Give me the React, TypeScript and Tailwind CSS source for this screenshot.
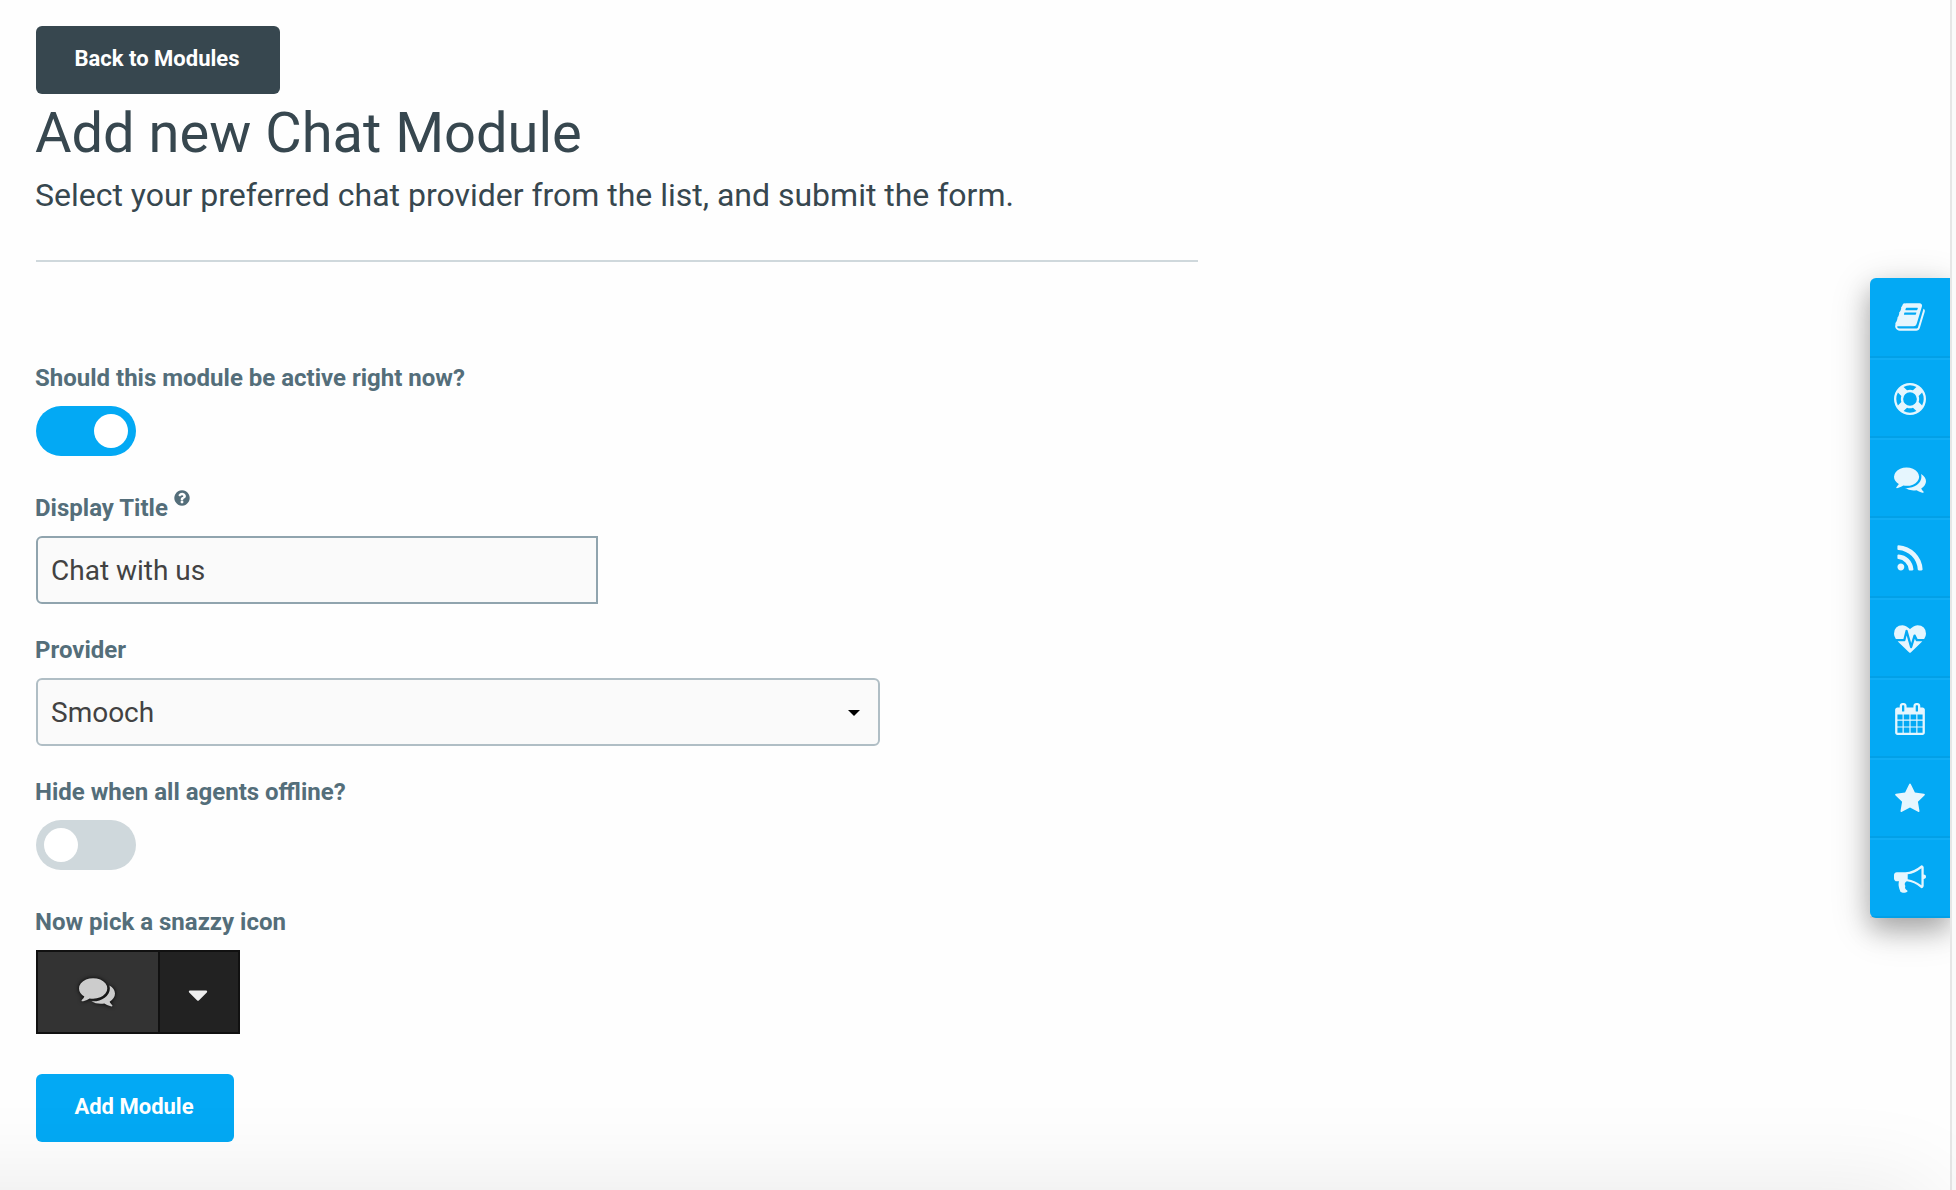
import React from "react";

const paths = {
  book: "M1703 478q40 57 18 129l-275 906q-19 64-76.5 107.5t-122.5 43.5h-923q-77 0-148.5-53.5t-99.5-131.5q-24-67-2-127 0-4 3-27t4-37q1-8-3-21.5t-3-19.5q2-11 8-21t16.5-23.5 16.5-23.5q23-38 45-91.5t30-91.5q3-10 .5-30t-.5-28q3-11 17-28t17-23q21-36 42-92t25-90q1-9-2.5-32t.5-28q4-13 22-30.5t22-22.5q19-26 42.5-84.5t27.5-96.5q1-8-3-25.5t-2-26.5q2-8 9-18t18-23 17-21q8-12 16.5-30.5t15-35 16-36 19.5-32 26.5-23.5 36-11.5 47.5 5.5l-1 3q38-9 51-9h761q74 0 114 56t18 130l-274 906q-36 119-71.5 153.5t-128.5 34.5h-869q-27 0-38 15-11 16-1 43 24 70 144 70h923q29 0 56-15.5t35-41.5l300-987q7-22 5-57 38 15 59 43zm-1064 2q-4 13 2 22.5t20 9.5h608q13 0 25.5-9.5t16.5-22.5l21-64q4-13-2-22.5t-20-9.5h-608q-13 0-25.5 9.5t-16.5 22.5zm-83 256q-4 13 2 22.5t20 9.5h608q13 0 25.5-9.5t16.5-22.5l21-64q4-13-2-22.5t-20-9.5h-608q-13 0-25.5 9.5t-16.5 22.5z",
  lifeRing: "M896 0q182 0 348 71t286 191 191 286 71 348-71 348-191 286-286 191-348 71-348-71-286-191-191-286-71-348 71-348 191-286 286-191 348-71zm0 128q-190 0-361 90l194 194q82-28 167-28t167 28l194-194q-171-90-361-90zm-678 1129l194-194q-28-82-28-167t28-167l-194-194q-90 171-90 361t90 361zm678 407q190 0 361-90l-194-194q-82 28-167 28t-167-28l-194 194q171 90 361 90zm0-384q159 0 271.5-112.5t112.5-271.5-112.5-271.5-271.5-112.5-271.5 112.5-112.5 271.5 112.5 271.5 271.5 112.5zm484-217l194 194q90-171 90-361t-90-361l-194 194q28 82 28 167t-28 167z",
  comments: "M1408 768q0 139-94 257t-256.5 186.5-353.5 68.5q-86 0-176-16-124 88-278 128-36 9-86 16h-3q-11 0-20.5-8t-11.5-21q-1-3-1-6.5t.5-6.5 2-6l2.5-5 3.5-5.5 4-5 4.5-5 4-4.5q5-6 23-25t26-29.5 22.5-29 25-38.5 20.5-44q-124-72-195-177t-71-224q0-139 94-257t256.5-186.5 353.5-68.5 353.5 68.5 256.5 186.5 94 257zm384 256q0 120-71 224.5t-195 176.5q10 24 20.5 44t25 38.5 22.5 29 26 29.5 23 25q1 1 4 4.5t4.5 5 4 5 3.5 5.5l2.5 5 2 6 .5 6.5-1 6.5q-3 14-13 22t-22 7q-50-7-86-16-154-40-278-128-90 16-176 16-271 0-472-132 58 4 88 4 161 0 309-45t264-129q125-92 192-212t67-254q0-77-23-152 129 71 204 178t75 230z",
  rss: "M576 1344q0 80-56 136t-136 56-136-56-56-136 56-136 136-56 136 56 56 136zm512 123q2 28-17 48-18 21-47 21h-135q-25 0-43-16.5t-20-41.5q-22-229-184.5-391.5t-391.5-184.5q-25-2-41.5-20t-16.5-43v-135q0-29 21-47 17-17 43-17h5q160 13 306 80.5t259 181.5q114 113 181.5 259t80.5 306zm512 2q2 27-18 47-18 20-46 20h-143q-26 0-44.5-17.5t-19.5-42.5q-12-215-101-408.5t-231.5-336-336-231.5-408.5-102q-25-1-42.5-19.5t-17.5-43.5v-143q0-28 20-46 18-18 44-18h3q262 13 501.5 120t425.5 294q187 186 294 425.5t120 501.5z",
  heartbeat: "M1280 1024h305q-5 6-10 10.5t-9 7.5l-3 4-623 600q-18 18-44 18t-44-18l-624-602q-5-2-21-20h369q22 0 39.5-13.5t22.5-34.5l70-281 190 667q6 20 23 33t39 13q21 0 38-13t23-33l146-485 56 112q18 35 57 35zm512-428q0 145-103 300h-369l-111-221q-8-17-25.5-27t-36.5-8q-45 5-56 46l-129 430-196-686q-6-20-23.5-33t-39.5-13-39 13.5-22 34.5l-116 464h-423q-103-155-103-300 0-220 127-344t351-124q62 0 126.5 21.5t120 58 95.5 68.5 76 68q36-36 76-68t95.5-68.5 120-58 126.5-21.5q224 0 351 124t127 344z",
  calendar: "M192 1664h288v-288h-288v288zm352 0h320v-288h-320v288zm-352-352h288v-320h-288v320zm352 0h320v-320h-320v320zm-352-384h288v-288h-288v288zm736 736h320v-288h-320v288zm-384-736h320v-288h-320v288zm768 736h288v-288h-288v288zm-384-352h320v-320h-320v320zm-352-864v-288q0-13-9.5-22.5t-22.5-9.5h-64q-13 0-22.5 9.5t-9.5 22.5v288q0 13 9.5 22.5t22.5 9.5h64q13 0 22.5-9.5t9.5-22.5zm736 864h288v-320h-288v320zm-384-384h320v-288h-320v288zm384 0h288v-288h-288v288zm32-480v-288q0-13-9.5-22.5t-22.5-9.5h-64q-13 0-22.5 9.5t-9.5 22.5v288q0 13 9.5 22.5t22.5 9.5h64q13 0 22.5-9.5t9.5-22.5zm384-64v1280q0 52-38 90t-90 38h-1408q-52 0-90-38t-38-90v-1280q0-52 38-90t90-38h128v-96q0-66 47-113t113-47h64q66 0 113 47t47 113v96h384v-96q0-66 47-113t113-47h64q66 0 113 47t47 113v96h128q52 0 90 38t38 90z",
  star: "M1728 647q0 22-26 48l-363 354 86 500q1 7 1 20 0 21-10.5 35.5t-30.5 14.5q-19 0-40-12l-449-236-449 236q-22 12-40 12-21 0-31.5-14.5t-10.5-35.5q0-6 2-20l86-500-364-354q-25-27-25-48 0-37 56-46l502-73 225-455q19-41 49-41t49 41l225 455 502 73q56 9 56 46z",
  bullhorn: "M1664 640q53 0 90.5 37.5t37.5 90.5-37.5 90.5-90.5 37.5v384q0 52-38 90t-90 38q-417-347-812-380-58 19-91 66t-31 100.5 40 92.5q-20 33-23 65.5t6 58 33.5 55 48 50 61.5 50.5q-29 58-111.5 83t-168.5 11.5-132-55.5q-7-23-29.5-87.5t-32-94.5-23-89-15-101 3.5-98.5 22-110.5h-122q-66 0-113-47t-47-113v-192q0-66 47-113t113-47h480q435 0 896-384 52 0 90 38t38 90v384zm-128 604v-954q-394 302-768 343v270q377 42 768 341z",
  question: "M1024 1376v-192q0-14-9-23t-23-9h-192q-14 0-23 9t-9 23v192q0 14 9 23t23 9h192q14 0 23-9t9-23zm256-672q0-88-55.5-163t-138.5-116-170-41q-243 0-371 213-15 24 8 42l132 100q7 6 19 6 16 0 25-12 53-68 86-92 34-24 86-24 48 0 85.5 26t37.5 59q0 38-20 61t-68 45q-63 28-115.5 86.5t-52.5 125.5v36q0 14 9 23t23 9h192q14 0 23-9t9-23q0-19 21.5-49.5t54.5-49.5q32-18 49-28.5t46-35 44.5-48 28-60.5 12.5-81zm384 192q0 209-103 385.5t-279.5 279.5-385.5 103-385.5-103-279.5-279.5-103-385.5 103-385.5 279.5-279.5 385.5-103 385.5 103 279.5 279.5 103 385.5z",
  caretDown: "M1408 704q0 26-19 45l-448 448q-19 19-45 19t-45-19l-448-448q-19-19-19-45t19-45 45-19h896q26 0 45 19t19 45z",
};

type IconName = keyof typeof paths;

function Icon({ name, className }: { name: IconName; className: string }) {
  return (
    <svg viewBox="0 0 1792 1792" fill="currentColor" overflow="visible" className={className} aria-hidden="true">
      <path d={paths[name]} />
    </svg>
  );
}

function Toggle({ on }: { on: boolean }) {
  return (
    <button
      role="switch"
      aria-checked={on}
      className={
        on
          ? "flex h-[50px] w-[100px] items-center justify-end rounded-full bg-[#03a9f4] px-2"
          : "flex h-[50px] w-[100px] items-center rounded-full bg-[#cfd8dc] px-2"
      }
    >
      <span className="size-[34px] rounded-full bg-white" />
    </button>
  );
}

function Label({ children }: { children: React.ReactNode }) {
  return <div className="-ml-px flex h-7 text-[24px] leading-7 font-bold whitespace-nowrap text-[#546e7a]">{children}</div>;
}

const dock: IconName[] = ["book", "lifeRing", "comments", "rss", "heartbeat", "calendar", "star", "bullhorn"];

export default function App() {
  return (
    <div className="relative flex h-[1190px] w-[1956px] overflow-hidden bg-[#fefefe] font-[Roboto,sans-serif]">
      <main className="flex flex-1 flex-col items-start pt-[26px] pl-9">
        <button className="h-[68px] w-[244px] rounded-[6px] bg-[#37474f] pr-0.5 pb-[3px] text-[22px] font-bold whitespace-nowrap text-white">
          Back to Modules
        </button>
        <h1 className="mt-1 -ml-px h-[70px] text-[56px] leading-[70px] whitespace-nowrap text-[#37474f]">
          Add new Chat Module
        </h1>
        <p className="mt-[7px] -ml-px h-[40px] text-[32px] leading-[40px] tracking-[-0.01px] whitespace-nowrap text-[#37474f]">
          Select your preferred chat provider from the list, and submit the form.
        </p>
        <div className="mt-[45px] h-[2px] w-[1162px] bg-[#cfd8dc]" />

        <section className="mt-[102px]">
          <Label>Should this module be active right now?</Label>
          <div className="mt-[14px]">
            <Toggle on />
          </div>
        </section>

        <section className="mt-[38px]">
          <Label>
            Display Title
            <Icon name="question" className="-mt-[5px] ml-[5px] size-[18px]" />
          </Label>
          <input
            type="text"
            defaultValue="Chat with us"
            className="mt-[14px] block h-[68px] w-[562px] rounded-l-[6px] border-2 border-[#90a4ae] bg-[#fafafa] px-[13px] text-[28px] text-[#424242] outline-none"
          />
        </section>

        <section className="mt-8">
          <Label>Provider</Label>
          <div className="mt-[14px] flex h-[68px] w-[844px] items-center justify-between rounded-[6px] border-2 border-[#b0bec5] bg-[#fafafa] pr-[18px] pl-[13px] text-[28px] text-[#424242]">
            <span className="pt-0.5">Smooch</span>
            <svg viewBox="0 0 12 6" className="mt-0.5 h-[6px] w-[12px]" aria-hidden="true">
              <path d="M0 0h12L6 6z" fill="#000" />
            </svg>
          </div>
        </section>

        <section className="mt-8">
          <Label>Hide when all agents offline?</Label>
          <div className="mt-[14px]">
            <Toggle on={false} />
          </div>
        </section>

        <section className="mt-[38px]">
          <Label>Now pick a snazzy icon</Label>
          <div className="mt-[14px] flex h-[84px] w-[204px] border-2 border-[#111]">
            <div className="flex w-[120px] items-start justify-center bg-[#333] pt-[21px] pr-0.5">
              <Icon name="comments" className="size-9 text-[#ccc] drop-shadow-[0_0_2px_#000]" />
            </div>
            <div className="flex flex-1 items-start justify-center border-l-2 border-[#111] bg-[#222] pt-[27px] pr-0.5">
              <Icon name="caretDown" className="size-8 text-[#eee]" />
            </div>
          </div>
        </section>

        <button className="mt-10 h-[68px] w-[198px] rounded-[6px] bg-[#03a9f4] pr-0.5 pb-[3px] text-[22px] font-bold whitespace-nowrap text-white">
          Add Module
        </button>
      </main>

      <nav className="relative mt-[278px] h-[640px] w-20 rounded-l-[6px] bg-[#03a9f4] shadow-[0_10px_40px_rgba(0,0,0,0.2),0_12px_24px_rgba(0,0,0,0.22)]">
        {dock.map((name, i) => (
          <a
            key={name}
            className={
              i === 0
                ? "flex h-20 justify-center border-b-2 border-black/5 pt-[23px]"
                : "flex h-20 justify-center border-t-2 border-b-2 border-t-white/5 border-b-black/5 pt-[22.5px]"
            }
          >
            <Icon name={name} className="size-8 text-white/90" />
          </a>
        ))}
      </nav>

      <div className="relative w-[6px] border-l-2 border-[#e6e6e6] bg-[#fafafa]" />

      <div className="pointer-events-none absolute top-[1190px] -left-52 h-52 w-[2140px] shadow-[0_0_100px_rgba(0,0,0,0.09)]" />
    </div>
  );
}
